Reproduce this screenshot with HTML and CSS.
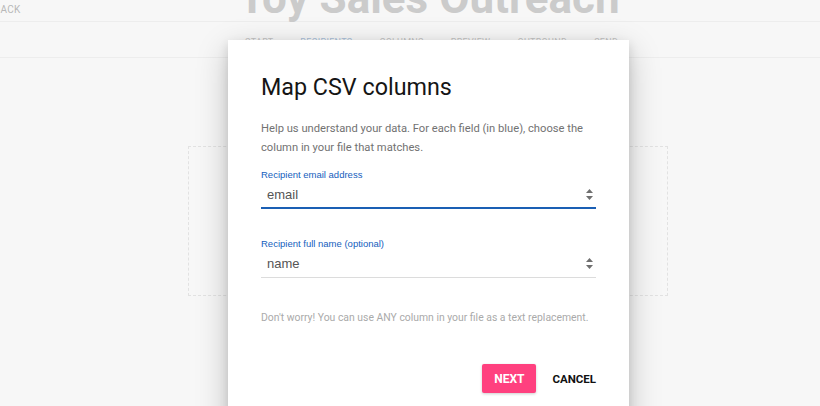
FILE: index.html
```html
<!DOCTYPE html>
<html lang="en">
<head>
  <meta charset="UTF-8" />
  <title>Toy Sales Outreach</title>
  <link rel="stylesheet" href="styles.css">
</head>
<body>
  <header class="topbar">
    <a class="back" href="#">BACK</a>
    <h1 class="page-title">Toy Sales Outreach</h1>
  </header>

  <nav class="steps">
    <span>START</span>
    <span class="active">RECIPIENTS</span>
    <span>COLUMNS</span>
    <span>PREVIEW</span>
    <span>OUTBOUND</span>
    <span>SEND</span>
  </nav>

  <section class="dropzone"></section>

  <div class="dialog" role="dialog" aria-label="Map CSV columns">
    <h2>Map CSV columns</h2>
    <p class="intro">Help us understand your data. For each field (in blue), choose the column in your file that matches.</p>

    <div class="field focused">
      <label>Recipient email address</label>
      <div class="select">
        <span>email</span>
        <svg class="arrows" width="7" height="11" viewBox="0 0 7 11"><path d="M3.5 0 L7 4 L0 4 Z M0 7 L7 7 L3.5 11 Z" fill="#6f6f6f"/></svg>
      </div>
    </div>

    <div class="field">
      <label>Recipient full name (optional)</label>
      <div class="select">
        <span>name</span>
        <svg class="arrows" width="7" height="11" viewBox="0 0 7 11"><path d="M3.5 0 L7 4 L0 4 Z M0 7 L7 7 L3.5 11 Z" fill="#6f6f6f"/></svg>
      </div>
    </div>

    <p class="note">Don't worry! You can use ANY column in your file as a text replacement.</p>

    <div class="actions">
      <button class="btn primary">NEXT</button>
      <button class="btn flat">CANCEL</button>
    </div>
  </div>
</body>
</html>
```

FILE: styles.css
```css
* {
  margin: 0; padding: 0; box-sizing: border-box;
}
body {
  background: #f7f7f7;
  font-family: Roboto, "Liberation Sans", sans-serif;
  height: 406px;
  overflow: hidden;
  position: relative;
}

.topbar {
  display: flow-root;
  height: 22px;
  border-bottom: 1px solid #ededed;
  position: relative;
}
.back {
  position: absolute;
  left: -6px;
  top: 4px;
  font-size: 10px;
  color: #b8b8b8;
  text-decoration: none;
  letter-spacing: 0.3px;
}
.page-title {
  font-size: 44px;
  font-weight: 700;
  color: #cbcbcb;
  text-align: center;
  line-height: 44px;
  margin-top: -24px;
  padding-left: 38px;
}

.steps {
  height: 36px;
  border-bottom: 1px solid #ededed;
  display: flex;
  gap: 27px;
  padding-left: 245px;
  padding-top: 15px;
  font-size: 9px;
  color: #c4c4c4;
  letter-spacing: 0.3px;
}
.steps .active {
  color: #a9bfd9;
}

.dropzone {
  width: 480px;
  height: 150px;
  margin: 88px 0 0 188px;
  border: 1px dashed #e2e2e2;
}

.dialog {
  position: absolute;
  left: 228px;
  top: 40px;
  width: 401px;
  height: 400px;
  background: #fff;
  padding: 31px 33px 0;
  box-shadow: 0 10px 30px rgba(0, 0, 0, 0.22), 0 4px 10px rgba(0, 0, 0, 0.12);
}
.dialog h2 {
  font-size: 23.3px;
  font-weight: 400;
  color: #151515;
  line-height: 32px;
}
.intro {
  margin-top: 16px;
  font-size: 11.2px;
  line-height: 19px;
  color: #727272;
}

.field {
  margin-top: 12px;
}
.field + .field {
  margin-top: 29px;
}
.field label {
  display: block;
  font-family: "Liberation Sans", Arial, sans-serif;
  font-size: 9.5px;
  color: #1560bd;
  line-height: 12px;
}
.select {
  height: 28px;
  display: flex;
  align-items: center;
  justify-content: space-between;
  padding: 0 3px 0 6px;
  border-bottom: 1px solid #dcdcdc;
  font-family: "Liberation Sans", Arial, sans-serif;
  font-size: 13px;
  color: #555;
}
.focused .select {
  border-bottom: 2px solid #1a5fb4;
}

.note {
  margin-top: 33px;
  font-size: 10.4px;
  color: #aaa;
}

.actions {
  margin-top: 40px;
  display: flex;
  justify-content: flex-end;
  align-items: center;
  gap: 16px;
}
.btn {
  font-family: Roboto, "Liberation Sans", sans-serif;
  font-weight: 700;
  font-size: 11.5px;
  border: none;
  background: none;
  cursor: pointer;
}
.btn.primary {
  background: #ff407f;
  color: #fff;
  width: 54px;
  height: 29px;
  border-radius: 2px;
  font-size: 12px;
  box-shadow: 0 1px 3px rgba(0, 0, 0, 0.2);
}
.btn.flat {
  color: #111;
}
```
